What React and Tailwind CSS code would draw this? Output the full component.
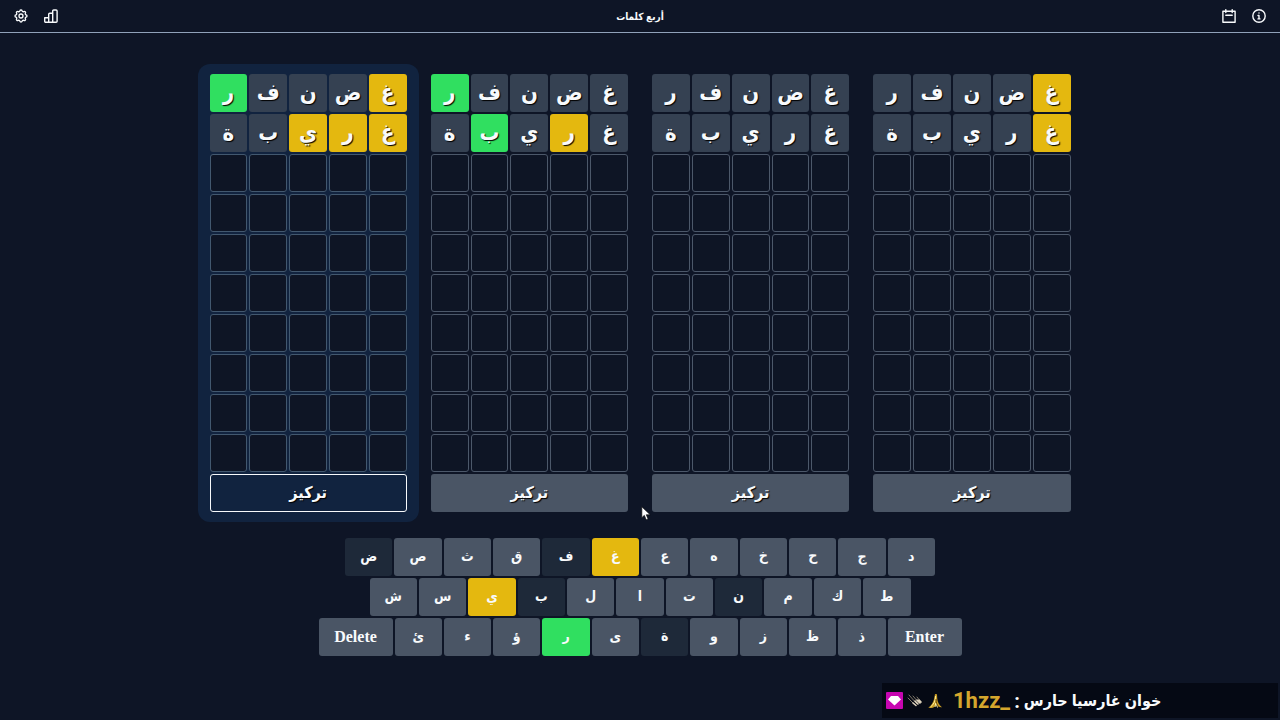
import React from 'react';
import { HiOutlineCog } from 'react-icons/hi';
import clsx from 'clsx';

const ROWS = 10;
const WORDS = ['غضنفر', 'غريبة'];

// g = correct, y = wrong place, x = absent
const BOARDS = [
    { id: 1, focused: true, marks: ['yxxxg', 'yyyxx'] },
    { id: 2, focused: false, marks: ['xxxxg', 'xyxgx'] },
    { id: 3, focused: false, marks: ['xxxxx', 'xxxxx'] },
    { id: 4, focused: false, marks: ['yxxxx', 'yxxxx'] },
];

const CELL_COLORS = {
    g: 'bg-[#30df60]',
    y: 'bg-[#e4b80f]',
    x: 'bg-[#354152]',
};

const KEY_ROWS = [
    { id: 'top', width: 'max-w-[590px]', keys: [...'دجحخهعغفقثصض'] },
    { id: 'middle', width: 'max-w-[541px]', keys: [...'طكمنتالبيسش'] },
    { id: 'bottom', width: 'max-w-[643px]', keys: ['Enter', ...'ذظزوةىرؤءئ', 'Delete'] },
];

const KEY_COLORS = {
    غ: 'bg-[#e4b80f]',
    ي: 'bg-[#e4b80f]',
    ر: 'bg-[#30df60]',
    ض: 'bg-[#1e2939]',
    ف: 'bg-[#1e2939]',
    ن: 'bg-[#1e2939]',
    ب: 'bg-[#1e2939]',
    ة: 'bg-[#1e2939]',
};

function IconButton({ label, children }) {
    return (
        <button type="button" aria-label={label} className="flex h-4 w-4 items-center justify-center">
            {children}
        </button>
    );
}

function LineIcon({ children }) {
    return (
        <svg viewBox="0 0 16 16" className="h-4 w-4" fill="none" stroke="currentColor" strokeWidth="1.4" strokeLinecap="round" strokeLinejoin="round">
            {children}
        </svg>
    );
}

function Header() {
    return (
        <header className="grid h-[33px] grid-cols-3 items-center border-b border-slate-400 px-[13px]">
            <div className="flex gap-[14px]">
                <IconButton label="الإعدادات">
                    <HiOutlineCog className="h-4 w-4" />
                </IconButton>
                <IconButton label="الإحصائيات">
                    <LineIcon>
                        <path d="M1.7 9.8h4v4.5h-3a1 1 0 0 1-1-1zM5.7 6.3a1 1 0 0 1 1-1h3v9h-4zM9.7 3a1 1 0 0 1 1-1h2.4a1 1 0 0 1 1 1v10.3a1 1 0 0 1-1 1H9.7z" />
                    </LineIcon>
                </IconButton>
            </div>
            <h1 className="text-center text-[10px] font-bold" dir="rtl">أربع كلمات</h1>
            <div className="flex justify-end gap-[14px]">
                <IconButton label="الأرشيف">
                    <LineIcon>
                        <path d="M1.9 3.2h12.2v11H1.9zM4.8 1.6v3M11.2 1.6v3M4.8 7.2h6.4" />
                    </LineIcon>
                </IconButton>
                <IconButton label="معلومات">
                    <LineIcon>
                        <circle cx="8" cy="8" r="6.2" />
                        <path d="M8 4.9v.2M7 7.5h1v3.300M7 10.9h2" />
                    </LineIcon>
                </IconButton>
            </div>
        </header>
    );
}

function Board({ board }) {
    return (
        <section
            dir="rtl"
            className={clsx('flex flex-col gap-[2px] rounded-xl px-3 py-[10px]', board.focused && 'bg-[#11233f]')}
        >
            {Array.from({ length: ROWS }, (_, row) => (
                <div key={row} className="grid grid-cols-5 gap-[2px]">
                    {Array.from({ length: 5 }, (_, col) => {
                        const mark = board.marks[row]?.[col];
                        return (
                            <div
                                key={col}
                                className={clsx(
                                    'flex h-[38px] items-center justify-center rounded-[3px] text-[22px] leading-7 font-bold text-shadow-[1px_1px_1px_#000000]',
                                    mark ? CELL_COLORS[mark] : 'border bg-[#0e1525]',
                                    !mark && (board.focused ? 'border-[#42586f]' : 'border-[#4c586a]')
                                )}
                            >
                                {mark && WORDS[row][col]}
                            </div>
                        );
                    })}
                </div>
            ))}
            <button
                type="button"
                className={clsx(
                    'h-[38px] rounded-[3px] text-base font-bold text-shadow-[1px_1px_1px_#000000]',
                    board.focused ? 'border border-slate-50' : 'bg-[#4a5565]'
                )}
            >
                تركيز
            </button>
        </section>
    );
}

function Keyboard() {
    return (
        <div dir="rtl" className="mt-4 flex flex-col items-center gap-[2px]">
            {KEY_ROWS.map((row) => (
                <div key={row.id} className={clsx('flex w-full gap-[2px]', row.width)}>
                    {row.keys.map((k) => (
                        <button
                            key={k}
                            type="button"
                            className={clsx(
                                'h-[38px] rounded-[3px] font-bold',
                                k.length > 1 ? 'w-[74px] text-base' : 'min-w-0 flex-1 text-sm',
                                KEY_COLORS[k] || 'bg-[#4a5565]'
                            )}
                        >
                            {k}
                        </button>
                    ))}
                </div>
            ))}
        </div>
    );
}

function ChatMessage() {
    return (
        <div className="fixed right-[2px] bottom-[2px] flex h-[35px] w-[396px] items-center bg-[#050914] pl-1">
            <svg viewBox="0 0 17 17" className="h-[17px] w-[17px]">
                <rect width="17" height="17" rx="1" fill="#c706b1" />
                <path d="M5 4h7l3 3.5-6.5 6L2 7.5z" fill="#fff" />
            </svg>
            <svg viewBox="0 0 16 16" className="ml-1 h-4 w-4" fill="none" strokeLinecap="round">
                <path d="M1 5l7 7M2 2l8 9M6 3l6 7M10 4l4 5" stroke="#80786a" strokeWidth="1" />
                <path d="M6 10l3 2.5M8 8l3 3M10 7l3 3M12 7l2 2" stroke="#ded3bd" strokeWidth="1.6" />
            </svg>
            <svg viewBox="0 0 16 16" className="ml-1 h-4 w-4">
                <path d="M8 1l2 .2.2 4c.2 4 2 7 4.8 9-3 .2-5-1-6.2-4-.3 2.500-1.4 4.3-4 4.8l-3.5-.3c3-2 4.7-5 5.7-8.5z" fill="#c79b22" />
                <path d="M8.5 3c.3 4-1.5 8.5-5 11M8 14l.8-4 1.7 4.5" stroke="#fff0a0" strokeWidth="1" fill="none" />
                <path d="M9 6c0 4 1 6 3 8" stroke="#66470b" strokeWidth="1" fill="none" />
            </svg>
            <p className="ml-[10px] flex items-center gap-1 whitespace-nowrap text-base font-bold">
                <span className="font-[Roboto,sans-serif] text-[22px] text-[#d5a62d]">1hzz_</span>
                <span className="font-[Roboto,sans-serif] text-xl">:</span>
                <span dir="rtl">خوان غارسيا حارس</span>
            </p>
        </div>
    );
}

function Pointer() {
    return (
        <svg viewBox="0 0 12 18" className="pointer-events-none fixed top-[506px] left-[641px] h-[15px] w-[10px]">
            <path d="M1 1v13l3-2.8 2.2 5.3 2.3-1-2.2-5H11z" fill="#fff" stroke="#111" strokeWidth=".8" />
        </svg>
    );
}

export default function App() {
    return (
        <div className="min-h-screen bg-[#0e1526] font-['Liberation_Serif','DejaVu_Sans_Condensed','DejaVu_Sans',serif] text-slate-50">
            <Header />
            <main className="pt-[31px]">
                <div className="mx-auto grid max-w-[885px] grid-cols-4">
                    {BOARDS.map((board) => (
                        <Board key={board.id} board={board} />
                    ))}
                </div>
                <Keyboard />
            </main>
            <ChatMessage />
            <Pointer />
        </div>
    );
}
